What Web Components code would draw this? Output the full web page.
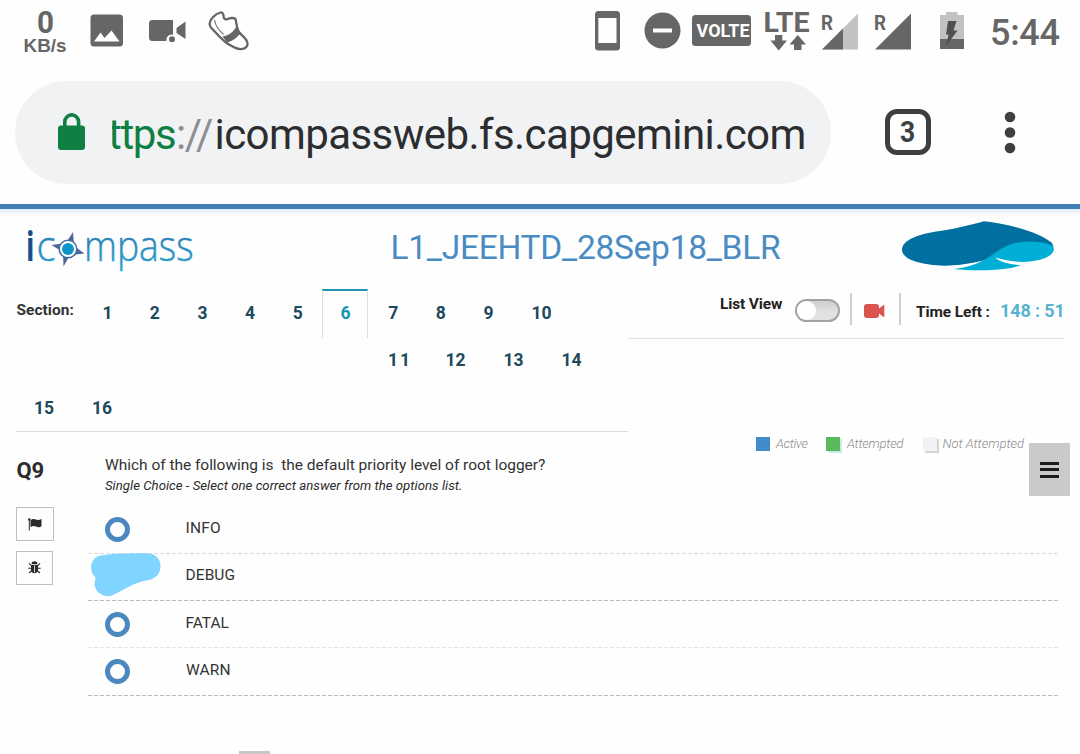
<!DOCTYPE html>
<html lang="en">
<head>
<meta charset="utf-8">
<title>icompass</title>
<style>
html,body{margin:0;padding:0;background:#fefefe}
body{width:1080px;height:754px;overflow:hidden;font-family:Roboto,"Noto Sans",sans-serif;color:#333}
</style>
</head>
<body>
<phone-screen></phone-screen>
<script>
const define = (name, html, after) => customElements.define(name, class extends HTMLElement {
  connectedCallback() {
    if (this.shadowRoot) return;
    const t = document.createElement('template');
    t.innerHTML = html;
    this.attachShadow({ mode: 'open' }).append(t.content.cloneNode(true));
    if (after) after(this, this.shadowRoot);
  }
});

/* A single line of text whose inked width is fitted to the w attribute. */
const ctx = document.createElement('canvas').getContext('2d');
define('fit-text', `<style>:host{display:block;flex:none;height:20px;line-height:20px;white-space:pre}span{display:inline-block;white-space:pre}</style><span><slot></slot></span>`, (el, root) => {
  const text = el.textContent, w = +el.getAttribute('w'), size = el.getAttribute('size') || 15.5;
  const weight = el.getAttribute('weight') || 400, slant = el.hasAttribute('italic') ? 'italic' : 'normal';
  el.style.width = w + 'px';
  el.style.font = `${slant} ${weight} ${size}px/20px Roboto, "Noto Sans", sans-serif`;
  ctx.font = `${slant} ${weight} ${size}px Roboto`;
  const m = ctx.measureText(text), span = root.querySelector('span');
  span.style.marginLeft = m.actualBoundingBoxLeft + 'px';
  if (text.length > 1) span.style.letterSpacing = (w - m.actualBoundingBoxLeft - m.actualBoundingBoxRight) / (text.length - 1) + 'px';
});

define('status-bar', `<style>
:host{display:flex;height:64px;align-items:flex-start;color:#666}
svg{display:block;flex:none;height:64px;fill:#666;font-family:Roboto,sans-serif}
</style>
<svg width="44" viewBox="23 0 44 64" style="margin-left:23px"><text x="37" y="33" font-size="32" font-weight="700" textLength="17" lengthAdjust="spacingAndGlyphs">0</text><text x="23.500" y="51.500" font-family="Liberation Sans" font-size="18" font-weight="700" textLength="43" lengthAdjust="spacingAndGlyphs">KB/s</text></svg>
<svg width="34" viewBox="90 0 34 64" style="margin-left:23px"><path fill-rule="evenodd" d="M94 14.500h25.500q3.500 0 3.500 3.500v25q0 3.500-3.500 3.500H94q-3.500 0-3.500-3.500V18q0-3.500 3.500-3.500zM94 41.500h25.500L111.500 30.500 104.500 38l-4-5.500z"/></svg>
<svg width="37" viewBox="149 0 37 64" style="margin-left:25px"><path d="M152.500 20H173v14.800a5.300 5.300 0 0 0-6.500 6.200h-14q-3.500 0-3.500-3.500V23.500q0-3.500 3.500-3.500zM176.500 28 185.500 21.500V39L176.500 33z"/><circle cx="172" cy="39.300" r="3"/></svg>
<svg width="42" viewBox="208 0 42 64" style="margin-left:22px"><path d="M220.500 12.500C215 14 210 19 209.500 24L210.500 27C215 31.500 220 38 226 42.500 231 46 236 49 241 49.200 245 49.200 248 46.500 247.500 43 247 38.500 242.500 36.500 239 32 236.500 28 236.500 22.500 235.500 19 233.500 17.500 230 18 227 19.200 224.500 20 223.500 18 223.500 15.500 223.200 13.500 222 12 220.500 12.500z" fill="#fff" stroke="#666" stroke-width="2.300" stroke-linejoin="round"/><path d="M222.500 36.500C229 35.500 234 31.500 236.500 26L240.500 33C237 38 233 40.500 227 42.500z"/><path d="M214.500 20C215.500 26.500 219 30 223.500 34.500" fill="none" stroke="#777" stroke-width="1.200"/></svg>
<svg width="27" viewBox="594 0 27 64" style="margin-left:344px"><path fill-rule="evenodd" d="M598.500 11h18q3.500 0 3.500 3.500v32.500q0 3.500-3.500 3.500h-18q-3.500 0-3.500-3.500V14.500q0-3.500 3.500-3.500zM598.300 18v25h18.200V18z"/></svg>
<svg width="37" viewBox="644 0 37 64" style="margin-left:23px"><circle cx="662.500" cy="30.500" r="18"/><path d="M653 28.500h19v4h-19z" fill="#fff"/></svg>
<svg width="59" viewBox="692 0 59 64" style="margin-left:11px"><rect x="692" y="15" width="59" height="31" rx="3.500"/><text x="696.500" y="37" font-size="18" font-weight="700" fill="#fff" textLength="53" lengthAdjust="spacingAndGlyphs">VOLTE</text></svg>
<svg width="47" viewBox="763 0 47 64" style="margin-left:12px"><text x="763.500" y="32" font-size="28" font-weight="700" textLength="46" lengthAdjust="spacingAndGlyphs">LTE</text><path d="M775 35h7.300v5.500h4.700L778.700 50.500 770.500 40.500h4.500zM794 50h7.500v-5.500h4.500L797.800 35 789.500 44.500h4.500z"/></svg>
<svg width="37" viewBox="821 0 37 64" style="margin-left:11px"><path d="M858 13.500V49.500H822z" fill="#c2c2c2"/><path d="M843 28.500v21h-21z"/><text x="821" y="29.500" font-size="20.500" font-weight="700" textLength="12" lengthAdjust="spacingAndGlyphs">R</text></svg>
<svg width="37" viewBox="874 0 37 64" style="margin-left:16px"><path d="M911 13.500V49.500H875z"/><text x="874" y="29.500" font-size="20.500" font-weight="700" textLength="12" lengthAdjust="spacingAndGlyphs">R</text></svg>
<svg width="26" viewBox="939 0 26 64" style="margin-left:28px"><path d="M946 12h11.500v3H964v34H940V15h6z" fill="#c2c2c2"/><path d="M940 39h24v10h-24z"/><path d="M948 21h8.500l-3 9.500h4L946.500 45.500l2-11h-2.500z" fill="#505050"/></svg>
<fit-text w="67.500" size="36" weight="500" style="margin:22.500px 0 0 27px">5:44</fit-text>`);

define('address-bar', `<style>
:host{display:flex;height:140px;align-items:flex-start}
.pill{display:flex;width:816px;height:103px;margin:17px 0 0 15px;border-radius:52px;background:#f1f2f4;flex:none}
.url{display:flex;overflow:hidden;height:70px;margin:14px 0 0 26px;width:697px}
.url fit-text{margin-top:29.500px}
svg{display:block;flex:none}
.tabs{box-sizing:border-box;width:46px;height:46px;margin:45px 0 0 53.500px;border:5px solid #3c4043;border-radius:12px;color:#3c4043;flex:none;display:flex;justify-content:center}
</style>
<div class="pill">
<svg width="28" height="103" viewBox="58 81 28 103" style="margin-left:43px"><rect x="58" y="125.500" width="27" height="24.500" rx="3" fill="#0e8043"/><path d="M64.800 127v-5.200a6.900 6.900 0 0 1 13.800 0V127" fill="none" stroke="#0e8043" stroke-width="3.600"/></svg>
<div class="url">
<fit-text w="67" size="42" style="color:#0e8043;margin-left:-4px">ttps</fit-text>
<fit-text w="35" size="42" style="color:#8c8e90;margin-left:3px">://</fit-text>
<fit-text w="587" size="42" style="color:#2c2d2f;margin-left:3.500px">icompassweb.fs.capgemini.com</fit-text>
</div></div>
<div class="tabs"><fit-text w="16" size="30" weight="700" style="margin-top:8px;transform:translateX(-1px) scaleX(.88)">3</fit-text></div>
<svg width="12" height="140" viewBox="1003.500 64 12 140" fill="#3c4043" style="margin-left:73px"><circle cx="1009.500" cy="117" r="5.300"/><circle cx="1009.500" cy="132.500" r="5.300"/><circle cx="1009.500" cy="148" r="5.300"/></svg>`);

define('exam-header', `<style>
:host{display:flex;height:80px;box-sizing:border-box;align-items:flex-start;border-top:5px solid #427fb5;background:linear-gradient(#e3eefa 0,#eaf3fc 3px,#fcf8f9 5px,#fefefe 10px)}
svg{display:block;flex:none;overflow:visible;font-family:"Open Sans","Noto Sans",sans-serif}
</style>
<svg width="180" height="68" viewBox="20 211 180 68" style="margin:2px 0 0 20px">
<defs><linearGradient id="g" x1="0" y1="0" x2="0" y2="1"><stop offset="0.300" stop-color="#2c7fb8"/><stop offset="1" stop-color="#2aa9cf"/></linearGradient></defs>
<text x="26" y="261" font-size="42" font-weight="700" fill="#16508a" textLength="8.500" lengthAdjust="spacingAndGlyphs">i</text>
<text x="36.500" y="261" font-size="43" font-weight="300" fill="url(#g)" stroke="url(#g)" stroke-width=".5" textLength="19" lengthAdjust="spacingAndGlyphs">c</text>
<text x="84" y="261" font-size="43" font-weight="300" fill="url(#g)" stroke="url(#g)" stroke-width=".5" textLength="109.500" lengthAdjust="spacingAndGlyphs">mpass</text>
<path d="M73 232 74 246 84.500 253.500 70 255 63.500 266.500 63 252 51.500 245 66 243z" fill="#4d6697"/><circle cx="68" cy="249" r="8.800" fill="#fff" stroke="#3f6ea5" stroke-width="1.500"/><circle cx="68" cy="249" r="6" fill="#0b95cb"/></svg>
<fit-text w="388.500" size="33.500" style="margin:28.500px 0 0 192.500px;color:#4a8bc2">L1_JEEHTD_28Sep18_BLR</fit-text>
<svg width="156" height="60" viewBox="900 215 156 60" style="margin:6px 0 0 119px"><path d="M984 221.300C1008 224 1040 232 1052 243L1053.500 247 1020 249 984 260.500C972 264.500 955 266 944 265.800 920 264.500 903 260 902 250 902 240 918 234 940 231 957 228.500 970 225 984 221.300z" fill="#0070a0"/><path d="M954 269C967 267 976 264.500 984 260 999 251 1007 242 1027 241.800 1042 241.300 1054 244 1054 249 1053 257 1040 261.500 1022 262 1011 261.500 1002 259.500 995 257.500 1000 262 1010 264.500 1021 265.300 1012 268.500 1000 270 987 270.200 974 270.500 962 270 954 269z" fill="#00aed6"/><path d="M944 265.900C960 265.500 972 263.500 983 260.300 975 264.500 966 267 955 268.500z" fill="#fff"/></svg>`);

define('section-tab', `<style>
:host{display:flex;box-sizing:border-box;width:46px;height:49px;flex:none;justify-content:center;padding-top:14px;color:#1d4a5c}
:host([wide]){width:58px}
:host([active]){border:1px solid #ddd;border-top:2px solid #1e94b0;border-bottom:0;padding-top:12px;color:#1694b8}
</style><slot></slot>`);

define('section-nav', `<style>
:host{display:flex;flex-direction:column;width:612px;margin-left:16px;height:143px;box-sizing:border-box;border-bottom:1.500px solid #ddd;flex:none}
.row{display:flex;align-items:flex-start;height:47.500px}
.row.b{height:47px;margin-top:-.500px}
.row.c{margin-top:.500px;margin-left:-.500px}
</style><div class="row a"><fit-text w="57" weight="700" style="margin:11px 10.300px 0 .500px">Section:</fit-text></div><div class="row b" style="padding-left:353px"></div><div class="row c"></div>`, (el, root) => {
  const add = (row, n, active) => {
    const t = document.createElement('section-tab'), f = document.createElement('fit-text');
    const wide = n > 9;
    if (wide) t.setAttribute('wide', '');
    if (active) t.setAttribute('active', '');
    f.textContent = n;
    f.setAttribute('size', 17.5);
    f.setAttribute('weight', 700);
    f.setAttribute('w', wide ? (n === 11 ? 18 : 19) : (n === 1 ? 6.5 : 9.5));
    t.append(f);
    if (!wide) t.style.marginRight = '1.7px';
    root.querySelector(row).append(t);
  };
  for (let n = 1; n <= 10; n++) add('.a', n, n === 6);
  for (let n = 11; n <= 14; n++) add('.b', n);
  add('.c', 15); add('.c', 16);
});

define('exam-tools', `<style>
:host{display:flex;align-items:flex-start;box-sizing:border-box;width:437px;height:50px;border-bottom:1.500px solid #e2e2e2;color:#222;flex:none}
.switch{box-sizing:border-box;width:45px;height:23px;border:2px solid #a2a2a2;border-radius:12px;background:linear-gradient(#cfcfcf,#e2e2e2 60%);margin:9.500px 0 0 12px;flex:none}
.knob{width:19px;height:19px;border-radius:50%;background:#fff}
.bar{width:2px;height:32px;background:#cfcfcf;margin-top:4px;flex:none}
svg{flex:none}
</style>
<fit-text w="63" weight="700" style="margin:4.500px 0 0 92px">List View</fit-text>
<div class="switch"><div class="knob"></div></div>
<div class="bar" style="margin-left:9.500px"></div>
<svg width="21" height="16" viewBox="0 0 21 16" style="margin:14px 13.500px 0 12.500px"><path d="M3 1h9q3 0 3 3v1.500L20.300 1.500v13L15 10.500V12q0 3-3 3H3q-3 0-3-3V4q0-3 3-3z" fill="#d9534f"/></svg>
<div class="bar"></div>
<fit-text w="73.500" weight="700" style="margin:12.500px 0 0 15.500px">Time Left :</fit-text>
<fit-text w="61.500" size="18" weight="700" style="margin:11.500px 0 0 11.500px;color:#55b3d0">148 : 51</fit-text>`);

define('status-legend', `<style>
:host{display:flex;align-items:flex-start;margin:98px 0 0 127px;color:#8c8c8c;width:315px}
i{width:14px;height:14px;margin-top:.500px;flex:none}
.menu{width:41px;height:53px;background:#cacaca;flex:none;margin:6.500px 0 0 3.500px;display:flex;flex-direction:column;align-items:center;gap:3.500px;padding-top:18.500px;box-sizing:border-box}
.menu b{width:19px;height:3px;background:#1c1c1c}
</style>
<i style="background:#428bca;margin-left:.500px"></i><fit-text w="33.500" size="13" weight="300" italic style="margin:-2.500px 0 0 5.500px">Active</fit-text>
<i style="background:#5cb85c;margin-left:17.500px;box-shadow:2px 2px #c5ece4"></i><fit-text w="58.500" size="13" weight="300" italic style="margin:-2.500px 0 0 6px">Attempted</fit-text>
<i style="background:#f2f2f2;margin-left:18px;box-shadow:2px 2px #d4d4d4"></i><fit-text w="82.500" size="13" weight="300" italic style="margin:-2.500px 0 0 6px">Not Attempted</fit-text>
<div class="menu"><b></b><b></b><b></b></div>`);

define('answer-option', `<style>
:host{display:flex;position:relative;width:970px;height:47.400px;align-items:flex-start}
.ring{box-sizing:border-box;width:25px;height:25px;border:5px solid #4a88bf;border-radius:50%;margin:11px 57px 0 16.500px;flex:none}
:host([marked]) .ring{visibility:hidden}
hr{position:absolute;left:0;right:0;bottom:0;height:1px;margin:0;border:0;background:repeating-linear-gradient(90deg,var(--dash,#dcdcdc) 0 4px,transparent 4px 6px)}
:host([first]) hr{bottom:-.600px}
svg{position:absolute;left:0;top:1px;z-index:1;overflow:visible}
:host(:not([marked])) svg{display:none}
</style><div class="ring"></div><slot></slot><hr>
<svg width="75" height="47" viewBox="88 554 75 47"><path d="M101 555.500C112 553.500 136 553 149 553.500 156 554 161 560 160.500 567 160 574 156 578 149 580 134 582 124 590 112 595.500 104 598 96 593 94.500 585L95.500 577.500C90 573 90 564 93.500 560 95.500 557 98 556 101 555.500z" fill="#80d4ff"/></svg>`);

define('question-panel', `<style>
:host{display:flex;align-items:flex-start;height:321px}
.side{width:72px;margin-left:16px;flex:none}
.btn{box-sizing:border-box;display:flex;justify-content:center;align-items:center;width:38px;height:34px;border:1px solid #bfbfbf}
.options{margin-top:10px}
.stub{width:31px;height:3px;margin:55px 0 0 151px;background:#c8c8c8}
</style>
<div class="side"><fit-text w="27" size="22" weight="700" style="margin:28px 0 0 .500px;color:#2c2c2c">Q9</fit-text>
<div class="btn" style="margin-top:26px"><svg width="14" height="13" viewBox="0 0 14 13" fill="#2b2b2b"><circle cx="1.300" cy="1.500" r="1.300"/><path d="M.8 2h1v10.500h-1zM2.500 2.200C5 .3 6.500 1 8 1.600 10 2.400 11.500 1.800 13.500 1V8.200C11 9.700 9.500 9.300 8 8.600 6 7.700 4.500 8 2.500 9.200z"/></svg></div>
<div class="btn" style="margin-top:10px;width:37px;padding-bottom:2px"><svg width="13" height="13" viewBox="0 0 13 13"><path d="M3.500 3.300a3 3 0 0 1 6 0z" fill="#2b2b2b"/><path d="M3 4h7v5q0 3-3.500 3.200Q3 12 3 9z" fill="#2b2b2b"/><path d="M1 2.300 3.500 5M12 2.300 9.500 5M.3 7.300h3M12.700 7.300h-3M1.200 12 3.700 9.500M11.800 12 9.300 9.500" stroke="#2b2b2b" stroke-width="1.100"/><path d="M6.500 4.500v7" stroke="#fff" stroke-width=".8"/></svg></div>
</div>
<div class="main">
<fit-text w="440" style="margin:21.500px 0 0 17px">Which of the following is  the default priority level of root logger?</fit-text>
<fit-text w="356" size="13.200" italic style="margin:1.500px 0 0 17px;color:#2b2b2b">Single Choice - Select one correct answer from the options list.</fit-text>
<div class="options">
<answer-option first><fit-text w="33.500" style="margin-top:12.300px">INFO</fit-text></answer-option>
<answer-option marked style="--dash:#bdbdbd"><fit-text w="48" style="margin-top:12px">DEBUG</fit-text></answer-option>
<answer-option style="--dash:#e4e4e4"><fit-text w="42" style="margin-top:12.400px">FATAL</fit-text></answer-option>
<answer-option style="--dash:#bdbdbd"><fit-text w="43.500" style="margin:12.300px 0 0 -.500px">WARN</fit-text></answer-option>
</div>
<div class="stub"></div>
</div>`);

define('phone-screen', `<style>
:host{display:block;width:1080px;height:754px;overflow:hidden}
.top{display:flex;align-items:flex-start;height:149px}
section-nav{margin-top:5px}
.right{margin-top:5px}
status-legend{margin-top:97.500px}
</style>
<status-bar></status-bar><address-bar></address-bar><exam-header></exam-header>
<div class="top"><section-nav></section-nav><div class="right"><exam-tools></exam-tools><status-legend></status-legend></div></div>
<question-panel></question-panel>`);
</script>
</body>
</html>
